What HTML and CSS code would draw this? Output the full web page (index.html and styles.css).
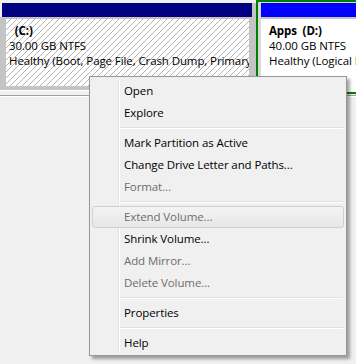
FILE: index.html
```html
<!DOCTYPE html>
<html lang="en">
<head>
    <meta charset="UTF-8">
    <title>Disk Management</title>
    <link rel="stylesheet" href="styles.css">
</head>
<body>
    <div class="disks">
        <div class="part part-c">
            <div class="bar bar-primary"></div>
            <div class="sel">
                <div class="hatch">
                    <div class="label"><b>&nbsp;&nbsp;(C:)</b></div>
                    <div>30.00 GB NTFS</div>
                    <div>Healthy (Boot, Page File, Crash Dump, Primary Partition)</div>
                </div>
            </div>
        </div>
        <div class="part part-d">
            <div class="bar bar-logical"></div>
            <div class="info">
                <div class="label"><b>Apps&nbsp; (D:)</b></div>
                <div>40.00 GB NTFS</div>
                <div>Healthy (Logical Drive)</div>
            </div>
        </div>
    </div>
    <div class="divider"></div>

    <div class="menu">
        <div class="list">
            <div class="item">Open</div>
            <div class="item">Explore</div>
            <div class="sep"></div>
            <div class="item">Mark Partition as Active</div>
            <div class="item">Change Drive Letter and Paths...</div>
            <div class="item disabled">Format...</div>
            <div class="sep"></div>
            <div class="item disabled hover">Extend Volume...</div>
            <div class="item">Shrink Volume...</div>
            <div class="item disabled">Add Mirror...</div>
            <div class="item disabled">Delete Volume...</div>
            <div class="sep"></div>
            <div class="item">Properties</div>
            <div class="sep"></div>
            <div class="item">Help</div>
        </div>
    </div>
</body>
</html>
```

FILE: styles.css
```css
/* Disk Management: partition strip + context menu */
body {
    margin: 0;
    background: #f0f0f0;
    font-family: "Open Sans", "Noto Sans", sans-serif;
    font-size: 11.5px;
    letter-spacing: -0.1px;
    color: #000;
    overflow: hidden;
}

.disks {
    display: flex;
    align-items: flex-start;
    height: 95px;
    overflow: hidden;
}

.part {
    line-height: 15px;
    white-space: nowrap;
}

.part-c {
    width: 256px;
    flex-shrink: 0;
    padding-top: 3px;
}

.bar {
    height: 14px;
}

.bar-primary {
    margin-left: 2px;
    background: #000080;
    border-right: 4px solid #c4c4c4;
}

.bar-logical {
    background: #0000ff;
}

.sel {
    background: #c4c4c4;
    padding: 2px 7px 4px 6px;
    border-bottom: 1px solid #fff;
}

.hatch {
    height: 67px;
    padding: 4px 0 0 3px;
    box-sizing: border-box;
    overflow: hidden;
    background: repeating-linear-gradient(135deg, #fff 0, #fff 3.2px, #b4b4b4 3.2px, #b4b4b4 4.24px);
}

.part-d {
    flex: 1;
    height: 94px;
    box-sizing: border-box;
    border: 2px solid #008000;
    border-right: none;
    background: #d8d8d8;
    padding: 1px 0 0 3px;
}

.info {
    height: 75px;
    box-sizing: border-box;
    border-top: 2px solid #c4c4c4;
    background: #fff;
    padding: 4px 0 0 8px;
    overflow: hidden;
}

.divider {
    border-top: 1px solid #a0a0a0;
    border-bottom: 1px solid #fff;
}

/* context menu */
.menu {
    position: absolute;
    left: 89px;
    top: 76px;
    width: 252px;
    padding: 3px 2px 1px;
    background: #f0f0f0;
    border: 1px solid #979797;
    box-shadow: 3px 3px 3px rgba(0, 0, 0, 0.35);
}

.list {
    background: linear-gradient(to right, transparent 26px, #e2e3e3 26px, #e2e3e3 27px, #fff 27px, #fff 28px, transparent 28px);
}

.item {
    height: 22px;
    line-height: 22px;
    padding-left: 32px;
    box-sizing: border-box;
}

.item.disabled {
    color: #6d6d6d;
}

.item.hover {
    border: 1px solid #cfcfcf;
    border-radius: 3px;
    line-height: 20px;
    padding-left: 31px;
    background: linear-gradient(#f3f3f3, #e7e7e7);
}

.sep {
    height: 8px;
    margin: 0 1px 0 28px;
    background: linear-gradient(transparent 3px, #e0e0e0 3px, #e0e0e0 4px, #fff 4px, #fff 5px, transparent 5px);
}
```
